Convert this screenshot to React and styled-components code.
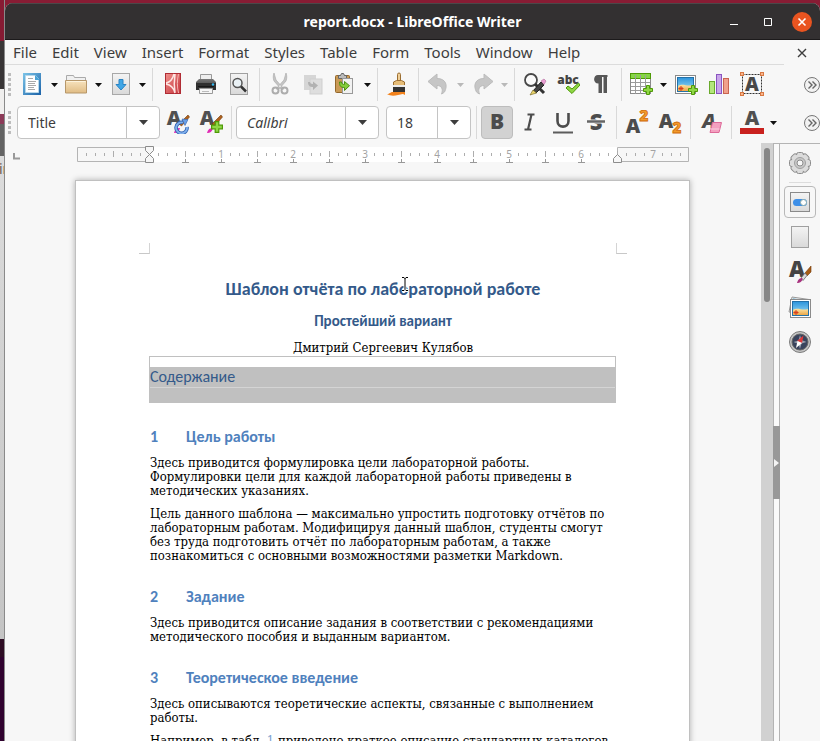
import React from "react";
import styled, { createGlobalStyle } from "styled-components";

const GlobalStyle = createGlobalStyle`
  * { box-sizing: border-box; }
  body { margin: 0; overflow: hidden; }
  button, input { font: inherit; color: inherit; margin: 0; padding: 0; border: 0; background: none; }
`;

/* ---------- desktop and window ---------- */
const Desktop = styled.div`
  display: flex;
  height: 100vh;
  overflow: hidden;
  background: #881c34;
  font-family: "Noto Sans", "Open Sans", sans-serif;
  font-size: 15px;
  color: #3d3d3d;
`;
const Behind = styled.div`
  flex: 0 0 5px;
  display: flex;
  flex-direction: column;
  overflow: hidden;
  border-right: 1px solid #8a8a8a;
`;
const Strip = styled.div`
  flex: ${(p) => (p.$h ? `0 0 ${p.$h}px` : 1)};
  background: ${(p) => p.$bg};
  font-size: 14px;
  line-height: 26px;
  text-indent: -1px;
  color: #6b5a52;
`;
const Window = styled.main`
  flex: 1;
  min-width: 0;
  margin-top: 3px;
  display: flex;
  flex-direction: column;
  background: #f7f7f7;
  border-radius: 8px 8px 0 0;
  overflow: hidden;
`;
const TitleBar = styled.header`
  display: grid;
  grid-template-columns: 1fr auto 1fr;
  align-items: center;
  flex: 0 0 37px;
  background: #333031;
  border-top: 1px solid #4b4849;
  border-bottom: 1px solid #1c1a1b;
  color: #fff;
`;
const WindowTitle = styled.h1`
  grid-column: 2;
  margin: 0;
  font-size: 14px;
  line-height: 20px;
  font-weight: 700;
`;
const WindowControls = styled.div`
  display: flex;
  justify-content: flex-end;
  gap: 14px;
  padding-right: 8px;
`;
const ControlButton = styled.button`
  width: 20px;
  height: 20px;
  border-radius: 50%;
  background: ${(p) => (p.$close ? "#e95420" : "none")};
  svg { display: block; }
`;

/* ---------- menu ---------- */
const MenuBar = styled.nav`
  display: flex;
  flex: 0 0 25px;
  align-items: center;
  padding-right: 12px;
`;
const MenuItems = styled.div`
  display: flex;
  flex: 1;
  align-self: stretch;
  gap: 15px;
  padding-left: 8px;
  margin-right: 12px;
  border-bottom: 1px solid #dcdcdc;
`;
const MenuItem = styled.button`
  line-height: 24px;
`;
const CloseDocument = styled.button`
  width: 12px;
  height: 12px;
  svg { display: block; }
`;

/* ---------- toolbars ---------- */
const Toolbar = styled.div`
  display: flex;
  align-items: center;
  gap: 1px;
  flex: 0 0 39px;
  padding: 0 0 ${(p) => (p.$last ? 2 : 0)}px 3px;
`;
const Grip = styled.div`
  width: 3px;
  height: 24px;
  margin-right: 5px;
  background: repeating-linear-gradient(#bdbdbd 0 3px, transparent 3px 5px);
`;
const Separator = styled.div`
  width: 1px;
  height: 33px;
  margin: 0 3px;
  background: #d9d9d9;
`;
const ToolButton = styled.button`
  display: flex;
  align-items: center;
  justify-content: center;
  width: 32px;
  height: 33px;
  padding-bottom: 1px;
  border-radius: 4px;
  border: 1px solid ${(p) => (p.$active ? "#bdbdbd" : "transparent")};
  background: ${(p) => (p.$active ? "#d2d2d2" : "none")};
`;
const Split = styled.div`
  display: flex;
`;
const ArrowButton = styled.button`
  display: flex;
  align-items: center;
  justify-content: center;
  width: 11px;
  color: ${(p) => (p.$off ? "#b9b9b9" : "#111")};
`;
const MoreButton = styled.button`
  width: 16px;
  height: 18px;
  margin-left: auto;
  svg { display: block; }
`;
const Combo = styled.div`
  display: flex;
  width: ${(p) => p.$w}px;
  height: 33px;
  margin-left: ${(p) => p.$ml || 0}px;
  margin-right: 1px;
  border: 1px solid #c4c4c4;
  border-radius: 4px;
  background: #fff;
`;
const ComboInput = styled.input`
  flex: 1;
  min-width: 0;
  padding: 0 10px;
  font-size: 14px;
  font-style: ${(p) => (p.$italic ? "italic" : "normal")};
  outline: none;
`;
const ComboButton = styled.button`
  display: flex;
  align-items: center;
  justify-content: center;
  width: 33px;
  border-left: 1px solid #c4c4c4;
`;

/* ---------- workspace ---------- */
const Workspace = styled.div`
  display: flex;
  flex: 1;
  min-height: 0;
`;
const Canvas = styled.div`
  flex: 1;
  min-width: 0;
  padding-right: 1px;
  overflow: hidden;
`;
const RulerRow = styled.div`
  display: grid;
  grid-template-columns: 16px 1fr 15px;
  align-items: center;
  height: 23px;
  svg { display: block; justify-self: center; }
`;
const Page = styled.article`
  max-width: 615px;
  min-height: 900px;
  margin: 14px auto 0;
  padding: 62px 73px 0 74px;
  background: #fff;
  border: 1px solid #c0c0c0;
  box-shadow: 0 0 6px rgba(0, 0, 0, 0.3);
  font-family: "DejaVu Serif Condensed", "DejaVu Serif", serif;
  font-stretch: condensed;
  font-size: 13px;
  line-height: 14px;
  color: #000;
`;
const Corners = styled.div`
  display: flex;
  justify-content: space-between;
  margin: 0 -11px 23px;
`;
const Corner = styled.div`
  width: 11px;
  height: 11px;
  border-bottom: 1px solid #c8c8c8;
  border-${(p) => p.$edge}: 1px solid #d4d4d4;
`;
const DocTitle = styled.h2`
  position: relative;
  margin: 0 0 10px;
  text-align: center;
  font: 700 18px/24px Carlito, Lato, sans-serif;
  color: #345a8a;
`;
const Caret = styled.svg`
  position: absolute;
  left: 251px;
  top: -1px;
`;
const Subtitle = styled.p`
  margin: 0 0 9px;
  text-align: center;
  font: 700 15px/20px Carlito, Lato, sans-serif;
  color: #345a8a;
`;
const Author = styled.p`
  margin: 0;
  text-align: center;
  line-height: 16px;
`;
const Contents = styled.section`
  margin: 0 0 24px -1px;
  padding-top: 10px;
  border: 1px solid #c0c0c0;
`;
const ContentsTitle = styled.h3`
  margin: 0;
  height: 20px;
  background: #c0c0c0;
  font: 400 16px/20px Carlito, Lato, sans-serif;
  color: #345a8a;
`;
const ContentsBody = styled.div`
  height: 15px;
  background: #c0c0c0;
  border-top: 1px solid #d4d4d4;
`;
const Heading = styled.h3`
  display: grid;
  grid-template-columns: 36px 1fr;
  margin: 0 0 9px;
  font: 700 16px/20px Carlito, Lato, sans-serif;
  color: #4f81bd;
`;
const Section = styled.section`
  margin-bottom: 24px;
`;
const Paragraph = styled.p`
  margin: 0 0 9px;
  white-space: nowrap;
`;
const RefLink = styled.a`
  color: #7d9fd0;
  text-decoration: none;
`;
const ScrollTrack = styled.div`
  flex: 0 0 12px;
  padding: 5px 3px;
  background: #d1d1d1;
`;
const ScrollThumb = styled.div`
  height: 154px;
  border-radius: 3px;
  background: #868686;
`;
const Splitter = styled.div`
  display: flex;
  align-items: center;
  flex: 0 0 7px;
  border: 1px solid #b4b4b4;
  border-bottom: 0;
  background: #fafafa;
`;
const SplitterHandle = styled.button`
  display: flex;
  align-items: center;
  flex: 0 0 7px;
  height: 73px;
  margin: 40px -1px 0;
  background: #989898;
`;
const Sidebar = styled.aside`
  display: flex;
  flex-direction: column;
  align-items: center;
  gap: 3px;
  flex: 0 0 40px;
  padding-top: 3px;
  border-top: 1px solid #b4b4b4;
`;
const SideRule = styled.div`
  width: 22px;
  height: 1px;
  background: #dcdcdc;
`;
const SideButton = styled.button`
  display: flex;
  align-items: center;
  justify-content: center;
  width: 32px;
  height: 32px;
  border: 1px solid ${(p) => (p.$on ? "#b8b8b8" : "transparent")};
  border-radius: 4px;
`;

/* ---------- icons ---------- */
const Svg = ({ children, w = 24, h = 24 }) => (
  <svg width={w} height={h} viewBox={`0 0 ${w} ${h}`} fill="none" aria-hidden="true">{children}</svg>
);
const letter = { fontFamily: "Open Sans, sans-serif", fontWeight: 800 };

const HiddenDefs = styled.svg`
  position: absolute;
`;
const Defs = () => (
  <HiddenDefs width="0" height="0" aria-hidden="true">
    <defs>
      <linearGradient id="blue" x2="1" y2="1"><stop stopColor="#7cc4e8" /><stop offset="1" stopColor="#1b62a8" /></linearGradient>
      <linearGradient id="paper" x2="0" y2="1"><stop stopColor="#f4f4f4" /><stop offset="1" stopColor="#d9d9d9" /></linearGradient>
      <linearGradient id="tan" x2="0" y2="1"><stop stopColor="#f7e3be" /><stop offset="1" stopColor="#e0bc84" /></linearGradient>
      <linearGradient id="red" x2="1" y2="1"><stop stopColor="#f0918c" /><stop offset="1" stopColor="#c4343c" /></linearGradient>
      <linearGradient id="dark" x2="0" y2="1"><stop stopColor="#777" /><stop offset="1" stopColor="#2e2e2e" /></linearGradient>
      <linearGradient id="sky" x2="0" y2="1"><stop stopColor="#2c94dc" /><stop offset="1" stopColor="#a5e2f6" /></linearGradient>
      <linearGradient id="sand" x2="0" y2="1"><stop stopColor="#fbe1a0" /><stop offset="1" stopColor="#eba84a" /></linearGradient>
    </defs>
  </HiddenDefs>
);
const Plus = ({ x, y }) => (
  <path transform={`translate(${x} ${y})`} d="M3.5.5h3v3h3v3h-3v3h-3v-3h-3v-3h3z" fill="#8fd645" stroke="#4e9a06" />
);
const Down = ({ wide }) =>
  wide ? (
    <svg width="9" height="5" aria-hidden="true"><path d="M0 0h9L4.500 5z" fill="#3d3d3d" /></svg>
  ) : (
    <svg width="7" height="4" aria-hidden="true"><path d="M0 0h7L3.500 4z" fill="currentColor" /></svg>
  );

const NewIcon = () => (
  <Svg>
    <rect x="2" y="1" width="18" height="22" fill="url(#blue)" />
    <path d="M4.500 3.500h10l3 3v14h-13z" fill="#fff" stroke="#b8d8ea" />
    <path d="M14 3l5 5h-5z" fill="#4aa3d6" />
    <path d="M7 6.500h5M7 9.500h8M7 11.500h7M7 13.500h8M7 15.500h6M7 17.500h7" stroke="#a9a9a9" />
  </Svg>
);
const OpenIcon = () => (
  <Svg>
    <path d="M1.500 9V3.500h7l1 2h11V9" fill="#f0f0f0" stroke="#aaa" />
    <path d="M.5 8.500h21v12.500H.5z" fill="url(#tan)" stroke="#b6976a" />
    <path d="M1.500 9.500h19" stroke="#fdf3dc" />
  </Svg>
);
const SaveIcon = () => (
  <Svg>
    <rect x="3.500" y="1.500" width="17" height="21" fill="url(#paper)" stroke="#a8a8a8" />
    <path d="M10 7.500h4v5h3L12 18l-5-5.500h3z" fill="#3fa6e6" stroke="#2b84c4" />
  </Svg>
);
const PdfIcon = () => (
  <Svg>
    <rect x="4.500" y="1.500" width="15" height="20" fill="url(#red)" stroke="#b02c34" />
    <path d="M5 11c5-1 7-5 8-9M5 12c6 1 8 5 9 9M14 2c-1 7-1 13 0 19" stroke="#fde5e2" strokeWidth="1.500" />
    <path d="M17.500 2c-1.500 7-1.500 12 0 19" stroke="#f6b4b0" />
  </Svg>
);
const PrintIcon = () => (
  <Svg>
    <path d="M6.500 9V2.500h11V9" fill="#eee" stroke="#999" />
    <path d="M2 10l3-3h14l3 3v8H2z" fill="url(#dark)" />
    <path d="M2 11h20v7H2z" fill="#303030" />
    <path d="M4 14.500h16" stroke="#181818" />
    <circle cx="19" cy="12.500" r="1.200" fill="#35b8f0" />
    <path d="M5.500 16.500h13v5h-13z" fill="#f6f6f6" stroke="#999" />
    <path d="M8 19.500h7" stroke="#bbb" />
  </Svg>
);
const PreviewIcon = () => (
  <Svg>
    <rect x="3.500" y="1.500" width="17" height="21" fill="url(#paper)" stroke="#a0a0a0" />
    <circle cx="10.500" cy="11" r="4.500" fill="#e9f1f5" stroke="#555" strokeWidth="1.500" />
    <path d="M14 14.500l5 5" stroke="#333" strokeWidth="2.500" />
  </Svg>
);
const CutIcon = () => (
  <Svg>
    <path d="M6 1l2 7 8 9-3 0L6 9C5 6 5 4 6 1zM18 1l-2 7-8 9h3l7-8c1-3 1-5 0-8z" fill="#c4c4c4" stroke="#b2b2b2" strokeWidth=".8" />
    <circle cx="7.500" cy="18.500" r="3" stroke="#adadad" strokeWidth="2" />
    <circle cx="16.500" cy="18.500" r="3" stroke="#adadad" strokeWidth="2" />
  </Svg>
);
const CopyIcon = () => (
  <Svg>
    <rect x="3" y="3" width="12" height="15" fill="#d6d6d6" />
    <rect x="9" y="7" width="12" height="15" fill="#dedede" stroke="#cfcfcf" />
    <path d="M7 10c0 4 2 5 5 5v3l5-4.500-5-4v2.500c-2 0-3-1-3-2z" fill="#b2b2b2" />
  </Svg>
);
const PasteIcon = () => (
  <Svg>
    <rect x="1.500" y="3.500" width="14" height="17" rx="1" fill="#c99a56" stroke="#94672b" />
    <path d="M4.500 6.500V3.500h2l1-2h2l1 2h2v3z" fill="#bbb" stroke="#666" />
    <rect x="8.500" y="6.500" width="10" height="15" fill="#f1f1f1" stroke="#999" />
    <path d="M5.500 10c0 4 1 5.500 5 5.500v3l5-4.800-5-4.200v3c-2 0-3-1-3-2.500z" fill="#83cd3b" stroke="#4b8e12" />
  </Svg>
);
const BrushIcon = () => (
  <Svg>
    <path d="M11.500 9V2.500a1.500 1.500 0 0 1 3 0V9" fill="#f0cf98" stroke="#9b6e32" />
    <path d="M7.500 14V10l3-1.500h5l3 1.500v4z" fill="#e6bd78" stroke="#9b6e32" />
    <path d="M7 13h12v2H7z" fill="#ececec" />
    <path d="M7 15h12v5H7z" fill="#333" />
    <path d="M1 22c3 0 3-2 6-2h12v3c-3-2-4 0-7 0-4 1-8 1-11-1z" fill="#f2821c" />
  </Svg>
);
const UndoIcon = () => (
  <Svg>
    <path d="M1 9.500L10 2v4.500c9 0 11 7 7.500 13.500-1 1-2 1.500-3 2 2-5 0-8.500-4.500-8.500V17z" fill="#c6c6c6" stroke="#bcbcbc" />
  </Svg>
);
const RedoIcon = () => (
  <Svg>
    <path d="M22 9.500L13 2v4.500c-9 0-11 7-7.500 13.500 1 1 2 1.500 3 2-2-5 0-8.500 4.500-8.500V17z" fill="#c6c6c6" stroke="#bcbcbc" />
  </Svg>
);
const FindIcon = () => (
  <Svg>
    <circle cx="8" cy="8" r="6" fill="#fafafa" stroke="#484848" strokeWidth="1.800" />
    <path d="M12 12l9 9" stroke="#333" strokeWidth="3" />
    <path d="M10 19l8-9 3 3-8 8z" fill="#444" stroke="#222" />
    <path d="M18 9l3-2 2 2-2 3.500z" fill="#ec9fd4" stroke="#b06a9a" strokeWidth=".6" />
    <path d="M7 23l3-5 3.500 3z" fill="#e9d36b" stroke="#6b5e1c" strokeWidth=".6" />
  </Svg>
);
const SpellIcon = () => (
  <Svg>
    <text x="12" y="12" textAnchor="middle" fontSize="12" fill="#444" {...letter}>abc</text>
    <path d="M10 16l2-2 4 3 6.500-6 1.500 2-8 8.500z" fill="#8fd645" stroke="#4e9a06" />
  </Svg>
);
const ParaIcon = () => (
  <Svg>
    <path d="M9 3h9.500v2H18v16h-3.500V5H13v16H9.500v-9.500C3.500 11.500 4 3 9 3z" fill="#575757" />
  </Svg>
);
const TableIcon = () => (
  <Svg>
    <rect x=".5" y="2.500" width="20" height="19" fill="#fff" stroke="#8a8a8a" />
    <rect x=".5" y="1.500" width="20" height="5" fill="#86d645" stroke="#4e9a06" />
    <path d="M5.500 3v19M10.500 3v19M15.500 3v19M1 10.500h19M1 14.500h19M1 18.500h19" stroke="#9b9b9b" />
    <Plus x={13} y={13} />
  </Svg>
);
const Beach = ({ x, y }) => (
  <g transform={`translate(${x} ${y})`}>
    <rect x=".5" y=".5" width="20" height="18" fill="#fff" stroke="#8a8a8a" />
    <rect x="2.500" y="2.500" width="16" height="14" fill="url(#sky)" stroke="#2471a8" />
    <path d="M3 11c5-3 9 1 15-1v6H3z" fill="url(#sand)" />
    <path d="M6 11v5M3.500 13.500h5M4.500 12l3 3M7.500 12l-3 3" stroke="#d9401c" />
  </g>
);
const ImageIcon = () => (
  <Svg><Beach x={1} y={3} /><Plus x={14} y={13} /></Svg>
);
const ChartIcon = () => (
  <Svg>
    <rect x="2.500" y="9.500" width="5" height="12" fill="#b4e67c" stroke="#6aaa2c" />
    <rect x="9.500" y="2.500" width="5" height="19" fill="#c9a4ea" stroke="#8a55c0" />
    <rect x="16.500" y="6.500" width="5" height="15" fill="#f0a08c" stroke="#c96450" />
  </Svg>
);
const TextBoxIcon = () => (
  <Svg>
    <rect x="2.500" y="2.500" width="19" height="19" stroke="#333" strokeDasharray="2 1" />
    <text x="12" y="19" textAnchor="middle" fontSize="19" fill="#484848" {...letter}>A</text>
    {[[0, 0], [20, 0], [0, 20], [20, 20]].map(([x, y]) => (
      <rect key={`${x}-${y}`} x={x + 0.5} y={y + 0.5} width="3" height="3" fill="#f8b48c" stroke="#d87842" />
    ))}
  </Svg>
);
const MoreIcon = () => (
  <svg width="16" height="18" viewBox="0 0 16 18" fill="none" aria-hidden="true">
    <circle cx="8" cy="9" r="7.500" fill="#f2f2f2" stroke="#777" />
    <path d="M4.500 5.500L8 9l-3.500 3.500M8.500 5.500L12 9l-3.500 3.500" stroke="#666" strokeWidth="1.400" />
  </svg>
);
const StyleBrush = () => (
  <>
    <path d="M13 14L22 5l1.500 2-8 9z" fill="#b0611c" stroke="#6e3a0c" strokeWidth=".6" />
    <path d="M8 23c1-4 3-5 6-5-1 4-3 5-6 5z" fill="#e02cb4" />
  </>
);
const UpdateStyleIcon = () => (
  <Svg>
    <text x="8" y="15" textAnchor="middle" fontSize="20" fill="#505050" {...letter}>A</text>
    <StyleBrush />
    <path d="M21 17a5.500 5.500 0 1 1-4-4.500" stroke="#2d62b4" strokeWidth="3.500" />
    <path d="M21 17a5.500 5.500 0 1 1-4-4.500" stroke="#82b1ec" strokeWidth="1.800" />
    <path d="M16 9l6 .5-3 6z" fill="#6a9fe4" stroke="#2d62b4" strokeWidth=".6" />
  </Svg>
);
const NewStyleIcon = () => (
  <Svg>
    <text x="8" y="15" textAnchor="middle" fontSize="20" fill="#505050" {...letter}>A</text>
    <StyleBrush />
    <g transform="translate(12 11) scale(1.200)"><Plus x={0} y={0} /></g>
  </Svg>
);
const BoldIcon = () => (
  <Svg><text x="12" y="19" textAnchor="middle" fontSize="21" fill="#4c4c4c" {...letter}>B</text></Svg>
);
const ItalicIcon = () => (
  <Svg><path d="M9.500 4.500h7M6.500 19.500h7M13.500 4.500l-3.500 15" stroke="#4c4c4c" strokeWidth="2.200" /></Svg>
);
const UnderlineIcon = () => (
  <Svg>
    <path d="M6.500 3v8c0 7.500 11 7.500 11 0V3" stroke="#4c4c4c" strokeWidth="2.600" />
    <path d="M2 22.500h20" stroke="#5c5c5c" strokeWidth="2" />
  </Svg>
);
const StrikeIcon = () => (
  <Svg>
    <text x="12" y="20" textAnchor="middle" fontSize="22" fill="#4c4c4c" {...letter}>S</text>
    <path d="M3 11.500h18" stroke="#f7f7f7" strokeWidth="4" />
    <path d="M3 11.500h18" stroke="#666" strokeWidth="2.400" />
  </Svg>
);
const orange = { fill: "#f39a2c", stroke: "#cf6a0a", strokeWidth: 0.8 };
const SuperIcon = () => (
  <Svg>
    <text x="8" y="23" textAnchor="middle" fontSize="20" fill="#4c4c4c" {...letter}>A</text>
    <text x="19" y="11" textAnchor="middle" fontSize="15" {...letter} {...orange}>2</text>
  </Svg>
);
const SubIcon = () => (
  <Svg>
    <text x="8" y="18" textAnchor="middle" fontSize="20" fill="#4c4c4c" {...letter}>A</text>
    <text x="19" y="23" textAnchor="middle" fontSize="15" {...letter} {...orange}>2</text>
  </Svg>
);
const ClearIcon = () => (
  <Svg>
    <text x="10" y="18" textAnchor="middle" fontSize="20" fill="#4c4c4c" fontStyle="italic" {...letter}>A</text>
    <path d="M13.500 12.500h9l-2.500 10h-9z" fill="#f4a0c0" stroke="#dd6a98" />
    <path d="M11.500 19h9" stroke="#fbd0e0" />
  </Svg>
);
const FontColorIcon = () => (
  <Svg>
    <text x="12" y="15" textAnchor="middle" fontSize="20" fill="#505050" {...letter}>A</text>
    <path d="M0 18h24v6H0z" fill="#c9211e" />
  </Svg>
);
const GearIcon = () => (
  <Svg>
    <g stroke="#8c8c8c">
      {[0, 45, 90, 135].map((a) => (
        <rect key={a} x="8.500" y="1.500" width="7" height="21" rx="2" fill="#dcdcdc" transform={`rotate(${a} 12 12)`} />
      ))}
    </g>
    <circle cx="12" cy="12" r="8.500" fill="#dcdcdc" />
    <circle cx="12" cy="12" r="5.500" fill="#c8c8c8" stroke="#a0a0a0" />
    <circle cx="12" cy="12" r="3" fill="#f7f7f7" stroke="#8c8c8c" />
  </Svg>
);
const PropsIcon = () => (
  <Svg>
    <rect x="2.500" y="2.500" width="19" height="19" fill="url(#paper)" stroke="#8a8a8a" />
    <rect x="5" y="9" width="14" height="7" rx="3.500" fill="#3d8fe8" />
    <circle cx="15.500" cy="12.500" r="3" fill="#fff" stroke="#8aa" />
  </Svg>
);
const PageIcon = () => (
  <Svg><rect x="3.500" y="1.500" width="17" height="21" fill="url(#paper)" stroke="#a0a0a0" /></Svg>
);
const StylesIcon = () => (
  <Svg>
    <text x="9" y="17" textAnchor="middle" fontSize="22" fill="#444" {...letter}>A</text>
    <path d="M17 13l6-7v6l-4 4z" fill="#a85c14" stroke="#6e3a0c" strokeWidth=".6" />
    <path d="M13 18l4-5 2 2.500-4 5z" fill="#ddd" stroke="#666" strokeWidth=".8" />
    <path d="M9 23c1-4 3-5 5.500-5 0 4-3 5-5.500 5z" fill="#a8327e" />
  </Svg>
);
const GalleryIcon = () => (
  <Svg>
    <path d="M4 2l17 2.500-2 15L1 17z" fill="#eee" stroke="#999" />
    <path d="M5 3.500l8 1-2 3H4z" fill="#2c94c4" />
    <Beach x={2} y={4} />
  </Svg>
);
const CompassIcon = () => (
  <Svg>
    <circle cx="12" cy="12" r="10.500" fill="#c4c4c4" stroke="#7c7c7c" />
    <circle cx="12" cy="12" r="8" fill="#39435c" stroke="#666" />
    <path d="M12 5l1.500 5 5 2-5 1.500L12 19l-1.500-5-5-2 5-1.500z" fill="#9aa0ae" />
    <path d="M15.500 5.500L14 13l-5-2z" fill="#e03a3a" />
    <path d="M8 18l1.500-7 4.500 2z" fill="#fff" />
  </Svg>
);

/* ---------- ruler ---------- */
const EIGHTHS = Array.from({ length: 67 }, (_, i) => i - 7);
const Ruler = () => (
  <svg width="613" height="18" viewBox="0 0 613 18" fill="none" role="img" aria-label="Ruler">
    <rect x="72" y="1" width="469" height="15" fill="#fff" />
    <path d="M72 1.500H.5v14H72M540.500 1.500h71v14h-71z" stroke="#b4b4b4" />
    {EIGHTHS.filter((i) => i % 8 !== 0).map((i) => {
      const half = i % 4 === 0;
      return <path key={i} d={`M${72.5 + i * 9} ${half ? 5 : 7}v${half ? 6 : 3}`} stroke="#adadad" />;
    })}
    {[1, 2, 3, 4, 5, 6, 7].map((n) => (
      <text key={n} x={72 + n * 72} y="12" textAnchor="middle" fontSize="10" fill="#a3a3a3" fontFamily="Noto Sans, sans-serif">{n}</text>
    ))}
    {Array.from({ length: 12 }, (_, i) => (
      <path key={i} d={`M${108.5 + i * 36} 13v3M${105 + i * 36} 16.500h7`} stroke="#999" />
    ))}
    <path d="M68.500.5h8v4l-4 4-4-4zM72.500 8.500l4 4v4h-8v-4z" fill="#f7f7f7" stroke="#8c8c8c" />
    <path d="M540.500 8.500l4 4v4h-8v-4z" fill="#f7f7f7" stroke="#8c8c8c" />
  </svg>
);

/* ---------- data ---------- */
const MENUS = ["File", "Edit", "View", "Insert", "Format", "Styles", "Table", "Form", "Tools", "Window", "Help"];
const STANDARD = [
  ["New", NewIcon, "split"], ["Open", OpenIcon, "split"], ["Save", SaveIcon, "split"], null,
  ["Export as PDF", PdfIcon], ["Print", PrintIcon], ["Print Preview", PreviewIcon], null,
  ["Cut", CutIcon], ["Copy", CopyIcon], ["Paste", PasteIcon, "split"], null,
  ["Clone Formatting", BrushIcon], null,
  ["Undo", UndoIcon, "off"], ["Redo", RedoIcon, "off"], null,
  ["Find and Replace", FindIcon], ["Spelling", SpellIcon], ["Formatting Marks", ParaIcon], null,
  ["Insert Table", TableIcon, "split"], ["Insert Image", ImageIcon], ["Insert Chart", ChartIcon], ["Insert Text Box", TextBoxIcon],
];
const STYLE_TOOLS = [["Update Style", UpdateStyleIcon], ["New Style", NewStyleIcon], null];
const FORMATTING = [
  null, ["Bold", BoldIcon, "active"], ["Italic", ItalicIcon], ["Underline", UnderlineIcon], ["Strikethrough", StrikeIcon], null,
  ["Superscript", SuperIcon], ["Subscript", SubIcon], null, ["Clear Formatting", ClearIcon], null,
  ["Font Color", FontColorIcon, "split"],
];

const Tools = ({ items }) =>
  items.map((item, i) => {
    if (!item) return <Separator key={i} />;
    const [label, Icon, kind] = item;
    const button = (
      <ToolButton key={label} type="button" aria-label={label} aria-pressed={kind === "active" || undefined} $active={kind === "active"}>
        <Icon />
      </ToolButton>
    );
    if (kind !== "split" && kind !== "off") return button;
    return (
      <Split key={label}>
        {button}
        <ArrowButton type="button" aria-label={`${label} options`} $off={kind === "off"}><Down /></ArrowButton>
      </Split>
    );
  });

const ComboBox = ({ label, value, w, ml, italic }) => (
  <Combo $w={w} $ml={ml}>
    <ComboInput aria-label={label} defaultValue={value} $italic={italic} />
    <ComboButton type="button" aria-label={`${label} list`}><Down wide /></ComboButton>
  </Combo>
);

const Lines = ({ rows }) => (
  <Paragraph>
    {rows.map((row, i) => (
      <React.Fragment key={i}>{i > 0 && <br />}{row}</React.Fragment>
    ))}
  </Paragraph>
);

export default function App() {
  return (
    <Desktop>
      <GlobalStyle />
      <Defs />
      <Behind>
        <Strip $h={41} $bg="#861b33" />
        <Strip $h={48} $bg="#383536" />
        <Strip $h={25} $bg="#f0efee" />
        <Strip $h={10} $bg="#8c3a58" />
        <Strip $h={32} $bg="#636363" />
        <Strip $bg="linear-gradient(#dcdcdc, #c4c4c4)">in</Strip>
        <Strip $h={18} $bg="#2e0d24" />
        <Strip $h={84} $bg="#30022f" />
      </Behind>
      <Window>
        <TitleBar>
          <WindowTitle>report.docx - LibreOffice Writer</WindowTitle>
          <WindowControls>
            <ControlButton type="button" aria-label="Minimize"><Svg w={20} h={20}><path d="M6 12.500h8" stroke="#fff" /></Svg></ControlButton>
            <ControlButton type="button" aria-label="Maximize"><Svg w={20} h={20}><path d="M6.500 6.500h7v7h-7z" stroke="#fff" /></Svg></ControlButton>
            <ControlButton type="button" aria-label="Close" $close><Svg w={20} h={20}><path d="M6.500 6.500l7 7M13.500 6.500l-7 7" stroke="#fff" strokeWidth="1.600" /></Svg></ControlButton>
          </WindowControls>
        </TitleBar>

        <MenuBar aria-label="Menu">
          <MenuItems>
            {MENUS.map((m) => <MenuItem key={m} type="button">{m}</MenuItem>)}
          </MenuItems>
          <CloseDocument type="button" aria-label="Close document">
            <Svg w={12} h={12}><path d="M2 2l8 8M10 2l-8 8" stroke="#3d3d3d" strokeWidth="1.400" /></Svg>
          </CloseDocument>
        </MenuBar>

        <Toolbar role="toolbar" aria-label="Standard">
          <Grip />
          <Tools items={STANDARD} />
          <MoreButton type="button" aria-label="More standard tools"><MoreIcon /></MoreButton>
        </Toolbar>
        <Toolbar $last role="toolbar" aria-label="Formatting">
          <Grip />
          <ComboBox label="Paragraph style" value="Title" w={143} />
          <Tools items={STYLE_TOOLS} />
          <ComboBox label="Font name" value="Calibri" w={143} italic />
          <ComboBox label="Font size" value="18" w={85} ml={5} />
          <Tools items={FORMATTING} />
          <MoreButton type="button" aria-label="More formatting tools"><MoreIcon /></MoreButton>
        </Toolbar>

        <Workspace>
          <Canvas>
            <RulerRow>
              <Svg w={16} h={18}><path d="M9 7v5.500h6" stroke="#999" strokeWidth="2" /></Svg>
              <Ruler />
            </RulerRow>
            <Page>
              <Corners><Corner $edge="right" /><Corner $edge="left" /></Corners>
              <DocTitle>
                Шаблон отчёта по лабораторной работе
                <Caret width="8" height="16" viewBox="0 0 8 16" fill="none" aria-hidden="true">
                  <path d="M1 1.500h2l1 1 1-1h2M4 2v11M1 14.500h2l1-1 1 1h2" stroke="#fff" strokeWidth="3" />
                  <path d="M1 1.500h2l1 1 1-1h2M4 2v11M1 14.500h2l1-1 1 1h2" stroke="#000" />
                </Caret>
              </DocTitle>
              <Subtitle>Простейший вариант</Subtitle>
              <Author>Дмитрий Сергеевич Кулябов</Author>
              <Contents>
                <ContentsTitle>Содержание</ContentsTitle>
                <ContentsBody />
              </Contents>
              <Section>
                <Heading><span>1</span><span>Цель работы</span></Heading>
                <Lines rows={["Здесь приводится формулировка цели лабораторной работы.", "Формулировки цели для каждой лабораторной работы приведены в", "методических указаниях."]} />
                <Lines rows={["Цель данного шаблона — максимально упростить подготовку отчётов по", "лабораторным работам. Модифицируя данный шаблон, студенты смогут", "без труда подготовить отчёт по лабораторным работам, а также", "познакомиться с основными возможностями разметки Markdown."]} />
              </Section>
              <Section>
                <Heading><span>2</span><span>Задание</span></Heading>
                <Lines rows={["Здесь приводится описание задания в соответствии с рекомендациями", "методического пособия и выданным вариантом."]} />
              </Section>
              <Section>
                <Heading><span>3</span><span>Теоретическое введение</span></Heading>
                <Lines rows={["Здесь описываются теоретические аспекты, связанные с выполнением", "работы."]} />
                <Paragraph>Например, в табл. <RefLink href="#tbl-1">1</RefLink> приведено краткое описание стандартных каталогов</Paragraph>
              </Section>
            </Page>
          </Canvas>
          <ScrollTrack><ScrollThumb /></ScrollTrack>
          <Splitter>
            <SplitterHandle type="button" aria-label="Hide sidebar">
              <svg width="7" height="8" aria-hidden="true"><path d="M1 0l5 4-5 4z" fill="#f4f4f4" /></svg>
            </SplitterHandle>
          </Splitter>
          <Sidebar>
            <SideButton type="button" aria-label="Sidebar settings"><GearIcon /></SideButton>
            <SideRule />
            <SideButton type="button" aria-label="Properties" $on><PropsIcon /></SideButton>
            <SideButton type="button" aria-label="Page"><PageIcon /></SideButton>
            <SideButton type="button" aria-label="Styles"><StylesIcon /></SideButton>
            <SideButton type="button" aria-label="Gallery"><GalleryIcon /></SideButton>
            <SideButton type="button" aria-label="Navigator"><CompassIcon /></SideButton>
          </Sidebar>
        </Workspace>
      </Window>
    </Desktop>
  );
}
